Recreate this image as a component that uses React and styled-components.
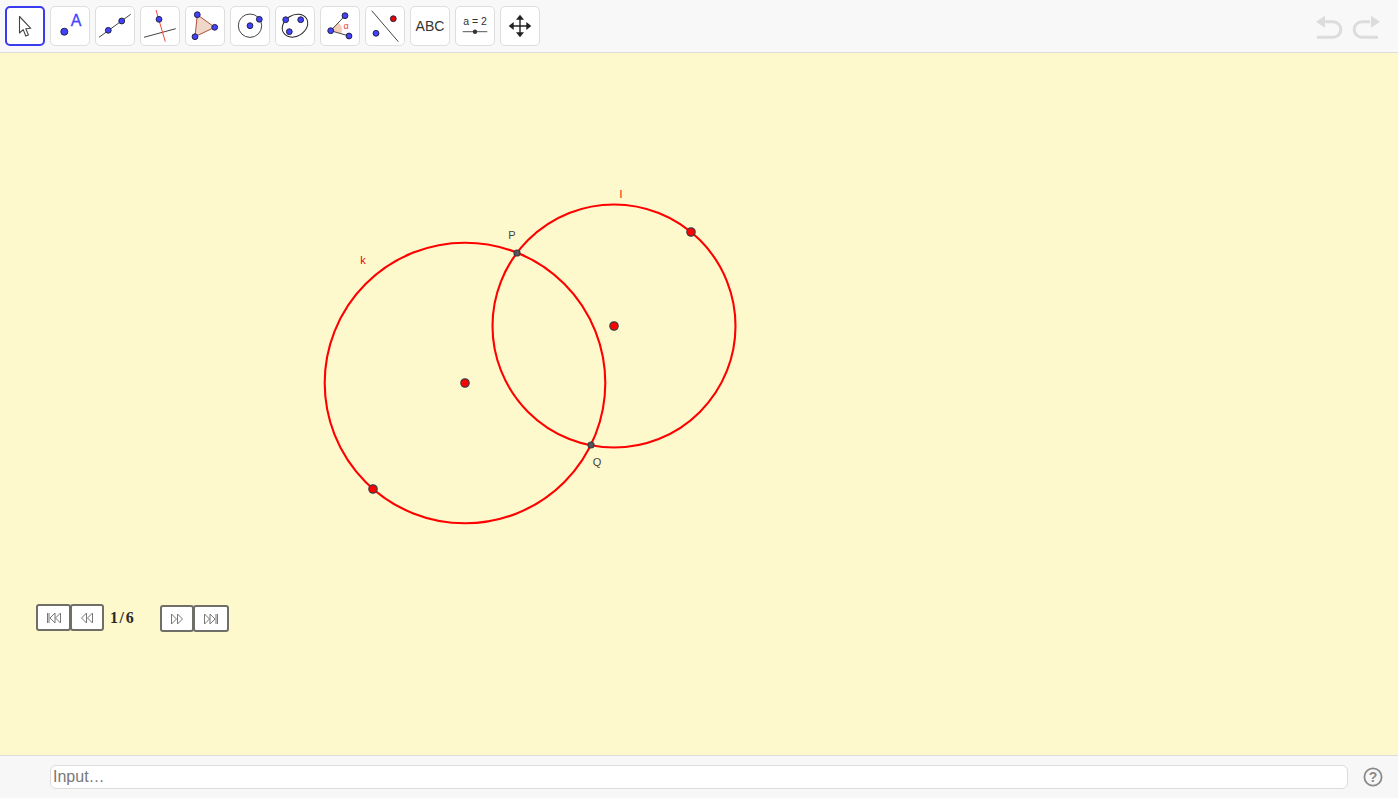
import React from 'react';
import styled, { createGlobalStyle } from 'styled-components';

const GlobalStyle = createGlobalStyle`
  html, body {
    margin: 0;
    padding: 0;
    background: white;
    font-family: "Liberation Sans", Arial, sans-serif;
  }
`;

const Wrapper = styled.div`
  width: 1398px;
  height: 798px;
  display: flex;
  flex-direction: column;
`;
const Toolbar = styled.div`
  height: 52px;
  flex: none;
  display: flex;
  align-items: flex-start;
  gap: 5px;
  padding-left: 5px;
  padding-right: 18px;
  background: #f8f8f8;
  border-bottom: 1px solid #dcdcdc;
`;
const ToolButton = styled.button`
  width: 40px;
  height: 40px;
  margin-top: 6px;
  padding: 0;
  flex: none;
  box-sizing: border-box;
  background: white;
  border: ${(props) => (props.$active ? '2px solid #3a3af0' : '1px solid #dedede')};
  border-radius: 5px;
  svg {
    display: block;
    margin: ${(props) => (props.$active ? '-2px' : '-1px')};
  }
`;
const History = styled.div`
  margin-left: auto;
  margin-top: 13px;
  display: flex;
  gap: 9px;
`;
const Canvas = styled.div`
  position: relative;
  flex: 1;
  background: #fef9cd;
  overflow: hidden;
`;
const Drawing = styled.svg`
  position: absolute;
  top: 0;
  left: 0;
`;
const Label = styled.text`
  font-family: "Liberation Sans", Arial, sans-serif;
  font-size: 11px;
  text-anchor: middle;
  fill: ${(props) => props.$color};
`;
const NavBar = styled.div`
  position: absolute;
  left: 36px;
  top: 551px;
  display: flex;
  align-items: flex-start;
`;
const NavGroup = styled.div`
  display: flex;
  margin-top: ${(props) => props.$drop || 0}px;
`;
const NavButton = styled.button`
  width: ${(props) => props.$width}px;
  height: 27px;
  padding: 0;
  margin-left: ${(props) => (props.$joined ? '-1px' : '0')};
  box-sizing: border-box;
  display: flex;
  align-items: center;
  justify-content: center;
  background: white;
  border: 2px solid #6f6f68;
  border-radius: 3px;
`;
const Counter = styled.div`
  width: 56px;
  height: 27px;
  box-sizing: border-box;
  padding-left: 6px;
  line-height: 27px;
  font-family: "Liberation Serif", "Times New Roman", serif;
  font-size: 16px;
  font-weight: bold;
  letter-spacing: 1.6px;
  color: #2a2a2a;
`;
const InputBar = styled.div`
  height: 42px;
  flex: none;
  display: flex;
  align-items: center;
  padding: 0 15px 0 50px;
  gap: 15px;
  background: #f7f7f7;
  border-top: 1px solid #dcdcdc;
`;
const AlgebraInput = styled.input`
  flex: 1;
  height: 24px;
  box-sizing: border-box;
  padding: 0 2px;
  background: white;
  border: 1px solid #dcdcdc;
  border-radius: 6px;
  outline: none;
  font-family: "Liberation Sans", Arial, sans-serif;
  font-size: 16px;
  &::placeholder {
    color: #777;
    opacity: 1;
  }
`;
const HelpIcon = styled.svg`
  flex: none;
`;

const BLUE = '#4343ff';
const RED = '#ff0000';

function Dot({ x, y, r = 2.9, fill = BLUE, ring = '#222244', width = 1 }) {
  return <circle cx={x} cy={y} r={r} fill={fill} stroke={ring} strokeWidth={width} />;
}

function PlanePoint({ x, y, fill = RED, r = 4.2 }) {
  return <Dot x={x} y={y} r={r} fill={fill} ring="#3c3c44" width={1.2} />;
}

function Icon({ children }) {
  return (
    <svg width="40" height="40" viewBox="0 0 40 40" fill="none">
      {children}
    </svg>
  );
}

const tools = [
  <Icon key="move">
    <path d="M14.5 10.5 L14.5 27 L18.2 23.6 L20.8 30 L23.4 28.9 L20.8 22.7 L25.8 22.3 Z" fill="white" stroke="#444" strokeWidth="1.1" strokeLinejoin="round" />
  </Icon>,
  <Icon key="point">
    <Dot x={14.3} y={25.7} r={3.5} />
    <text x={26} y={20} fontFamily="Liberation Sans, Arial, sans-serif" fontSize="16" fill={BLUE} stroke={BLUE} strokeWidth="0.3" textAnchor="middle">A</text>
  </Icon>,
  <Icon key="line">
    <path d="M4 31.3 L35.7 8.3" stroke="#444" strokeWidth="1" />
    <Dot x={13.3} y={24.3} />
    <Dot x={26.7} y={15} />
  </Icon>,
  <Icon key="perp">
    <path d="M4 31.3 L35.7 22.7" stroke="#444" strokeWidth="1" />
    <path d="M16 4 L25.3 35.7" stroke="#f04a3a" strokeWidth="1" />
    <Dot x={19} y={13.3} />
  </Icon>,
  <Icon key="polygon">
    <path d="M12.3 8.7 L29.7 21.3 L10 30.7 Z" fill="#f0d8c8" stroke="#b0503c" strokeWidth="1" />
    <Dot x={12.3} y={8.7} />
    <Dot x={29.7} y={21.3} />
    <Dot x={10} y={30.7} />
  </Icon>,
  <Icon key="circle">
    <circle cx="20" cy="19.7" r="11.7" stroke="#444" strokeWidth="1" />
    <Dot x={20} y={19.7} />
    <Dot x={29.3} y={13.3} />
  </Icon>,
  <Icon key="conic">
    <ellipse cx="20" cy="19.7" rx="13.5" ry="10.5" transform="rotate(-32 20 19.7)" stroke="#222" strokeWidth="1" />
    <Dot x={10.7} y={13.7} />
    <Dot x={25.7} y={13.7} />
    <Dot x={14.3} y={25.7} />
  </Icon>,
  <Icon key="angle">
    <path d="M10.7 24.7 L18.5 16.5 A11 11 0 0 1 21.5 27.5 Z" fill="#f6cdb6" />
    <path d="M25 9.7 L10.7 24.7 L29 30" stroke="#444" strokeWidth="1" />
    <text x={26} y={23} fontFamily="Liberation Sans, Arial, sans-serif" fontSize="9" fill="#ee4030" textAnchor="middle">α</text>
    <Dot x={25} y={9.7} />
    <Dot x={10.7} y={24.7} />
    <Dot x={29} y={30} />
  </Icon>,
  <Icon key="reflect">
    <path d="M6.7 4.7 L33.3 35.7" stroke="#444" strokeWidth="1" />
    <Dot x={28.3} y={12.7} fill="#f00000" />
    <Dot x={11} y={27.3} />
  </Icon>,
  <Icon key="text">
    <text x={20} y={25} fontFamily="Liberation Sans, Arial, sans-serif" fontSize="14" fill="#333" textAnchor="middle">ABC</text>
  </Icon>,
  <Icon key="slider">
    <text x={20} y={19} fontFamily="Liberation Sans, Arial, sans-serif" fontSize="10.5" fill="#333" textAnchor="middle">a = 2</text>
    <path d="M7.7 25.7 H32.3" stroke="#555" strokeWidth="1" />
    <circle cx="20" cy="25.7" r="2.2" fill="#333" />
  </Icon>,
  <Icon key="pan">
    <path d="M20 12 V28 M12 20 H28" stroke="#222" strokeWidth="1.4" />
    <path d="M20 8.7 L24 13.7 H16 Z M20 31.3 L24 26.3 H16 Z M8.7 20 L13.7 16 V24 Z M31.3 20 L26.3 16 V24 Z" fill="#222" />
  </Icon>,
];

function NavIcon({ dir, bar }) {
  const flip = dir === 'next' ? 'translate(16 0) scale(-1 1)' : undefined;
  return (
    <svg width="16" height="12" viewBox="0 0 16 12" fill="none" stroke="#777" strokeWidth="1">
      <g transform={flip}>
        {bar && <path d="M1.5 1 V11 M3 1 V11" />}
        <path d={bar ? 'M9 1 L4 6 L9 11 Z M14.5 1 L9.5 6 L14.5 11 Z' : 'M7.5 1 L2.5 6 L7.5 11 Z M13.5 1 L8.5 6 L13.5 11 Z'} />
      </g>
    </svg>
  );
}

export default function App() {
  return (
    <Wrapper>
      <GlobalStyle />
      <Toolbar>
        {tools.map((icon, i) => (
          <ToolButton key={icon.key} $active={i === 0}>{icon}</ToolButton>
        ))}
        <History>
          <svg width="28" height="28" viewBox="0 0 28 28" fill="none">
            <path d="M10 8.7 H18 A7.8 7.8 0 0 1 18 24.3 H2" stroke="#dcdcdc" strokeWidth="3" />
            <path d="M1 8.7 L10 2.7 V14.7 Z" fill="#dcdcdc" />
          </svg>
          <svg width="28" height="28" viewBox="0 0 28 28" fill="none">
            <path d="M18 8.7 H10 A7.8 7.8 0 0 0 10 24.3 H26" stroke="#dcdcdc" strokeWidth="3" />
            <path d="M28 8.7 L19 2.7 V14.7 Z" fill="#dcdcdc" />
          </svg>
        </History>
      </Toolbar>
      <Canvas>
        <Drawing width="1398" height="702" viewBox="0 53 1398 702" fill="none">
          <circle cx="465" cy="383" r="140.3" stroke={RED} strokeWidth="2.1" />
          <circle cx="614" cy="326" r="121.5" stroke={RED} strokeWidth="2.1" />
          <PlanePoint x={465} y={383} />
          <PlanePoint x={614} y={326} />
          <PlanePoint x={691} y={232} />
          <PlanePoint x={373} y={489} />
          <PlanePoint x={517} y={253} r={3} fill="#55555a" />
          <PlanePoint x={591} y={445} r={3} fill="#55555a" />
          <Label x={512} y={239} $color="#444">P</Label>
          <Label x={597} y={466} $color="#444">Q</Label>
          <Label x={363} y={264} $color="#f00000">k</Label>
          <Label x={621} y={198} $color="#f00000">l</Label>
        </Drawing>
        <NavBar>
          <NavGroup>
            <NavButton $width={35}><NavIcon bar /></NavButton>
            <NavButton $width={34} $joined><NavIcon /></NavButton>
          </NavGroup>
          <Counter>1/6</Counter>
          <NavGroup $drop={1}>
            <NavButton $width={34}><NavIcon dir="next" /></NavButton>
            <NavButton $width={36} $joined><NavIcon dir="next" bar /></NavButton>
          </NavGroup>
        </NavBar>
      </Canvas>
      <InputBar>
        <AlgebraInput placeholder="Input…" />
        <HelpIcon width="20" height="20" viewBox="0 0 20 20" fill="none">
          <circle cx="10" cy="10" r="8.6" stroke="#8a8a8a" strokeWidth="1.8" />
          <text x="10" y="15" fontFamily="Liberation Sans, Arial, sans-serif" fontSize="14" fontWeight="bold" fill="#8a8a8a" textAnchor="middle">?</text>
        </HelpIcon>
      </InputBar>
    </Wrapper>
  );
}
